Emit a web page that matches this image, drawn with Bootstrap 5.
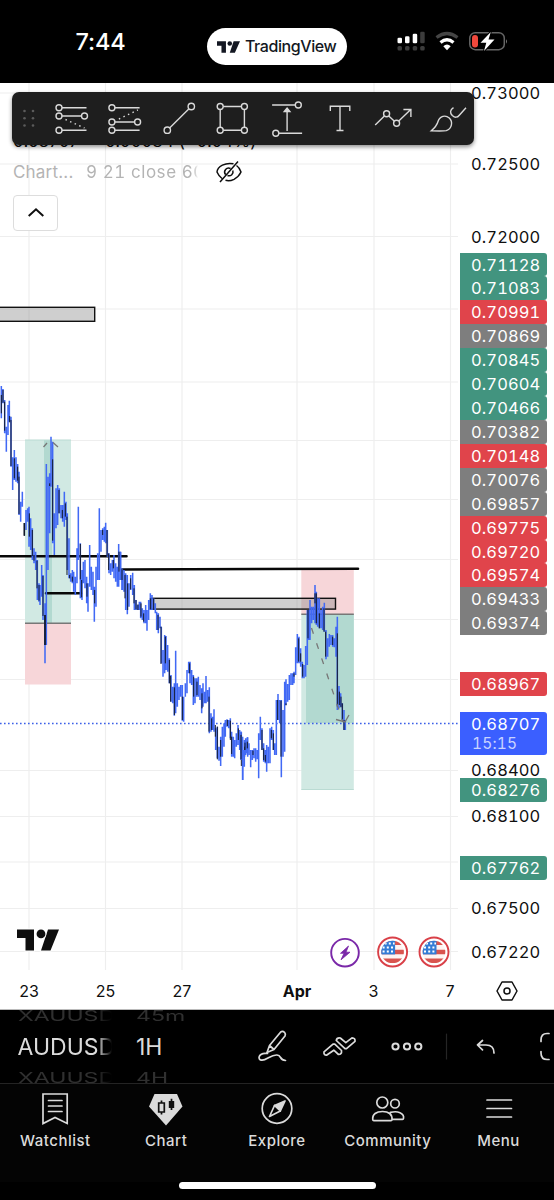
<!DOCTYPE html>
<html lang="en">
<head>
<meta charset="utf-8">
<meta name="viewport" content="width=device-width, initial-scale=1">
<title>TradingView</title>
<link href="https://cdn.jsdelivr.net/npm/bootstrap@5.3.0/dist/css/bootstrap.min.css" rel="stylesheet">
<style>
body{font-family:Inter,"Liberation Sans",sans-serif;background:#000;width:554px;height:1200px;overflow:hidden;font-size:17px;line-height:24px;color:#0f0f0f}
svg{display:block;overflow:visible;flex:none}
.status{height:83px;color:#fff}
.clock{width:201px;font-weight:500;font-size:23.5px;line-height:83px;letter-spacing:-.1px}
.island{width:140px;height:37px;margin-top:28px;margin-left:6px;color:#131722;font:500 16px/37px "Inter",sans-serif;letter-spacing:-.42px}
.board{height:927px;background:#fff;border-bottom:1px solid #bbb}
.plot{width:459.5px;height:887px;overflow:hidden}
.axis{width:94.5px;height:887px;overflow:hidden;font-variant-numeric:tabular-nums}
.tick,.tag{height:24px;line-height:25px;padding-left:11.5px;letter-spacing:.1px;font-size:16.5px;flex:none;white-space:nowrap}
.tag{width:87.5px;height:23.93px;color:#fff;border-radius:0 3px 3px 0}
.up{background:#42947f}.down{background:#e0444b}.flat{background:#7e7e7e}
.now{background:#3b5fff;height:43.5px;line-height:20px;padding-top:2.5px}
.now small{display:block;font-size:15.5px;color:#c8d3ff;padding-left:1px;letter-spacing:.2px}
.times{height:39px;font-size:16px}
.times span{width:76.5px;text-align:center;line-height:42px;flex:none}
.first{margin-left:-9.25px}
.month{margin-left:38.5px;font-weight:700}
.legend{left:13px;top:44px;width:300px}
.quote{height:24px;font-size:17px;white-space:pre;letter-spacing:.1px;line-height:29px}
.study{color:#b4b4b4;height:24px;margin-top:9px;font-size:17px}
.study .cut{width:112px;overflow:hidden;white-space:nowrap;margin-left:12px;letter-spacing:.55px;font-variant-numeric:tabular-nums;-webkit-mask-image:linear-gradient(90deg,#000 96%,transparent)}
.study .label{width:61px;letter-spacing:.2px;white-space:nowrap}
.fold{width:45px;height:36px;margin-top:10.5px;border:1.3px solid #ddd;border-radius:4px;background:#fff;padding:0}
.tools{left:11.5px;top:9px;width:462px;height:53px;background:#1e1e1e;border-radius:7px;box-shadow:0 2px 4px rgba(0,0,0,.45);fill:none;stroke:#d9d9d9;stroke-width:1.4}
.picker{height:74px;border-bottom:1px solid #242424;color:#dbdbdb;overflow:hidden}
.wheel{height:73px;margin-left:17.5px;overflow:hidden;white-space:nowrap}
.wheel div{font-size:23px;line-height:32px;height:31px}
.wheel .ghost{font-size:21px;color:#303030;transform:scale(1.1,.7);transform-origin:0 50%}
.sym{width:95px;-webkit-mask-image:linear-gradient(90deg,#000 83%,transparent 99%)}
.tf{width:90px;margin-left:23.5px}
.ico{fill:none;stroke:#dbdbdb;stroke-width:1.7;stroke-linejoin:round;stroke-linecap:round}
.tabs{height:98px;background:#040404;color:#dbdbdb}
.tabs a{color:inherit;font-weight:500;font-size:15px;line-height:20px;letter-spacing:.5px;width:110.8px}
.tabs .cap{margin-top:7px}
.home{width:197px;height:7px;border-radius:4px;background:#fff}
</style>
</head>
<body>
<header class="status d-flex">
  <div class="clock text-center">7:44</div>
  <div class="island bg-white rounded-pill d-flex align-items-center">
    <svg width="23" height="12" viewBox="0 0 36 18" style="margin-left:10px;margin-right:5px" fill="#131722"><path d="M0 0H14V18H7V7H0ZM26 0H36L28 18H20Z"/><circle cx="20" cy="3.6" r="3.6"/></svg>TradingView
  </div>
  <svg width="115" height="24" viewBox="395 29 115 24" style="margin-left:48px;margin-top:29px">
    <g fill="#fff"><rect x="397.5" y="37.7" width="4.5" height="5.5" rx="1.3"/><rect x="405" y="36.2" width="4.5" height="7" rx="1.3"/><rect x="412.7" y="33.7" width="4.5" height="9.5" rx="1.3"/></g>
    <g fill="#3c3c3c"><rect x="420.2" y="31.8" width="4.5" height="11.4" rx="1.3"/><rect x="397.5" y="46" width="4.5" height="4.5" rx="1.5"/><rect x="405" y="46" width="4.5" height="4.5" rx="1.5"/><rect x="412.7" y="46" width="4.5" height="4.5" rx="1.5"/><rect x="420.2" y="46" width="4.5" height="4.5" rx="1.5"/></g>
    <path d="M436.500 37.500Q447 29.500 457.500 37.500" fill="none" stroke="#454545" stroke-width="3.200"/><path d="M440.500 42.500Q447 37 453.500 42.500" fill="none" stroke="#fff" stroke-width="3.200"/><path d="M443.300 46.200Q447 43 450.700 46.200L447 50.200Z" fill="#fff"/>
    <rect x="469.800" y="32.700" width="34.500" height="17" rx="5.500" fill="none" stroke="#666" stroke-width="1.500"/><path d="M506 39.200q2 2 0 4.500z" fill="#777"/><rect x="472" y="35" width="6" height="12.500" rx="3" fill="#f0483c"/>
    <path d="M490.800 32 480.500 42.700H486.300L484 51 494.500 39.500H488.500Z" fill="#fff" stroke="#000" stroke-width="2" paint-order="stroke"/>
  </svg>
</header>

<main class="board position-relative">
  <div class="d-flex">
    <svg class="plot" width="459.500" height="887" viewBox="0 83 459.500 887">
      <path d="M29 83V970M105.500 83V970M182 83V970M297 83V970M374 83V970M450.500 83V970M0 93H458M0 164H458M0 236.500H458M0 309H458M0 382H458M0 440.500H458M0 499.500H458M0 559.500H458M0 619.500H458M0 679.500H458M0 770.500H458M0 816.500H458M0 862H458M0 908.500H458M0 951.500H458" stroke="#eee" stroke-width="1.200" fill="none"/>
      <rect x="25" y="440" width="46" height="183" fill="#d1e9e3"/><rect x="44" y="440" width="8" height="183" fill="#b2d9d0"/><rect x="25" y="623" width="46" height="61.500" fill="#f7d6d9"/>
      <rect x="301.300" y="570" width="52.500" height="44" fill="#f7d6d9"/><rect x="301.300" y="614" width="52.500" height="175.500" fill="#d1e9e3"/><rect x="306" y="614" width="47.800" height="109" fill="#b2d9d0"/>
      <path d="M25 440H71M301.300 789.500H353.800" stroke="#badbd3"/><path d="M25 623.200H71M301.300 614.300H353.800" stroke="#777" stroke-width="1.400"/>
      <g fill="#888" fill-opacity=".4" stroke="#111" stroke-width="1.400"><rect x="-2" y="307.300" width="96.700" height="14"/><rect x="151.500" y="598.300" width="184" height="10.800"/></g>
      <g stroke="#080808" stroke-width="2.600" stroke-linecap="round"><path d="M0 556.200H126.500M46 593.300H81M123 569.500 358 568.700"/></g>
      <path d="M0 723.500H459.500" stroke="#3b5fe8" stroke-width="1.300" stroke-dasharray="1.600 2.400"/>
      <!-- hourly bars, in thirds of a pixel: blue range first, dark falling bodies over it -->
      <g fill="none" stroke-width="4.600">
        <g transform="translate(0 370) scale(.33333)">
          <path stroke="#4169f5" d="M4 48V145M9 57V100M14 90V190M19 170V245M24 105V195M28 92V155M33 140V290M38 262V360M43 240V330M48 262V335M53 282V340M57 305V435M62 395V455M67 365V410M78 420V480M83 415V455M87 410V530M92 445V540M97 475V570M102 535V580M107 545V600M112 570V690M117 640V695M120 645V705M125 585V680M129 615V750M135 700V880M139 282V825M144 320V600M149 310V490M153 200V350M158 215V520M163 430V555M168 355V475M173 345V465M178 355V430M183 405V445M188 405V455M193 365V470M198 395V450M202 430V600M207 505V625M212 610V635M217 600V640M221 605V665M226 620V675M231 535V640M235 410V570M241 520V685M246 600V690M250 575V640M255 570V655M260 620V700M264 640V725M269 525V650M274 590V660M279 605V675M283 650V755M288 590V710M293 550V630M298 415V630M303 480V545M308 475V510M313 470V515M317 458V520M322 480V560M327 550V610M332 580V615M337 570V605M342 555V625M347 580V635M352 590V650M356 522V650M361 545V630M366 600V660"/>
          <path stroke="#111827" stroke-width="3" d="M4 75V130M9 60V98M14 95V182M29 138V157M33 150V288M43 265V325M53 290V332M57 320V432M73 459V497M88 430V500M97 480V558M102 555V572M111 572V655M117 645V692M129 618V738M135 735V825M149 340V348M158 268V512M177 360V430M187 420V445M196 400V440M201 440V615M209 615V625M217 620V635M241 522V628M245 630V682M261 640V680M284 660V700M308 480V495M321 480V558M326 550V600M340 570V595M357 545V605"/>
          <path stroke="#111827" d="M73 459V497M135 735V825"/>
        </g>
        <g transform="translate(120 550) scale(.33333)">
          <path stroke="#4169f5" d="M2 5V90M7 55V120M12 60V125M17 70V180M22 75V193M27 100V170M32 75V120M38 68V135M43 105V180M48 150V180M53 165V180M58 155V180M62 155V205M67 175V210M72 180V220M77 165V220M81 180V242M86 150V210M91 130V180M96 135V180M101 145V180M106 160V190M110 185V240M115 190V250M120 200V235M124 230V340M129 300V380M134 255V370M138 258V360M143 285V365M148 325V400M153 375V455M158 410V460M163 400V497M167 302V490M172 400V470M177 410V450M182 405V440M187 405V512M191 440V515M196 400V440M201 360V430M206 335V370M210 335V400M215 360V405M220 375V465M225 385V460M230 385V440M235 380V440M240 405V450M245 415V490M249 400V470M254 425V460M258 378V460M263 420V455M268 412V550M273 490V545M278 500V540M282 478V545M287 535V600M292 530V625M297 590V632M302 560V648M307 530V620M312 520V590M316 510V560M321 508V530M326 510V535M331 505V565M335 545V620M340 560V620M344 570V625M349 550V590M354 525V585M359 540V600M364 545V610M368 600V690M373 570V620M378 575V610M383 562V620"/>
          <path stroke="#111827" stroke-width="3" d="M6 55V90M15 75V145M23 100V180M32 85V118M42 115V160M48 150V178M54 163V180M63 160V200M71 190V215M91 145V178M101 145V180M114 195V240M123 230V342M136 260V340M148 330V400M152 378V455M163 412V495M187 440V510M209 340V370M221 380V440M231 395V435M246 430V475M267 440V545M275 505V540M286 525V560M292 530V628M302 570V620M322 510V528M331 512V570M335 560V612M355 535V570M364 550V648M374 590V620"/>
        </g>
        <g transform="translate(240 560) scale(.33333)">
          <path stroke="#4169f5" d="M3 515V600M8 530V660M13 570V620M17 535V585M22 532V580M27 550V585M32 570V622M37 570V600M42 565V595M47 565V605M52 570V598M56 520V655M61 470V540M66 505V570M71 550V605M76 570V610M80 555V635M85 560V610M90 505V610M95 500V540M100 510V570M104 550V585M109 420V585M114 402V480M119 420V490M124 420V652M129 450V590M134 365V575M138 358V435M143 372V425M148 345V420M153 340V375M158 340V375M162 335V370M167 262V345M172 222V310M177 230V310M182 265V320M187 305V355M192 315V355M197 258V350M202 150V315M206 150V240M210 120V240M215 140V190M220 140V180M225 75V190M229 95V195M233 115V200M238 115V205M243 150V205M248 140V210M253 128V215M258 210V298M263 235V290M268 222V260M273 225V255M278 225V260M283 235V262M288 200V290M292 170V450M297 378V445M302 400V440M307 430V480M312 450V510M316 480V510"/>
          <path stroke="#111827" stroke-width="3" d="M3 525V598M15 548V570M22 545V565M39 572V585M66 510V570M71 565V600M76 585V605M94 510V535M100 520V570M113 420V480M123 422V590M138 430V436M162 340V350M176 235V305M182 280V305M188 312V350M204 150V235M225 100V130M229 100V190M238 160V205M252 145V215M257 215V290M278 230V255M292 220V440M298 395V435M303 410V442M307 430V480M312 480V510"/>
        </g>
      </g>
      <g stroke="#777" stroke-width="1.300" fill="none"><path d="M311.500 628 343 722" stroke-dasharray="6 10"/><path d="M43.500 447 47 443M53 442.500 58 447M336 719.500 345 722 349 715"/></g>
      <g transform="translate(17 929.500)" fill="#0f0f0f" stroke="#fff" stroke-width="2" paint-order="stroke"><path d="M0 0H17V21H8.500V8.500H0ZM31 0H42L33.500 21H24Z"/><circle cx="24" cy="4.400" r="4.400"/></g>
      <circle cx="345" cy="952.700" r="13.800" fill="#fff" stroke="#7a28a8" stroke-width="1.900"/><path d="M348.500 946 340.500 953.300H344L341 959.800 350 952.200H346Z" fill="#7a28a8" stroke="#7a28a8" stroke-width=".8" stroke-linejoin="round"/>
      <defs><clipPath id="disc"><circle r="11.300"/></clipPath>
      <g id="usa"><circle r="14.500" fill="#fff" stroke="#d94048" stroke-width="1.900"/><g clip-path="url(#disc)"><rect x="-12" y="-12" width="24" height="24" fill="#fff4f2"/><path d="M-12-9.300H12M-12 0H12M-12 8.700H12" stroke="#d9544f" stroke-width="4.600"/><rect x="-12" y="-12" width="14.500" height="14.400" fill="#347cd5"/><path d="M-8-8.500H2M-10-4.500H2M-10-.5H2" stroke="#fff" stroke-width="2" stroke-dasharray="2 2.200"/></g></g></defs>
      <use href="#usa" x="392.600" y="952"/><use href="#usa" x="434" y="952"/>
    </svg>
    <div class="axis d-flex flex-column">
      <div class="tick" style="margin-top:-2px">0.73000</div>
      <div class="tick" style="margin-top:47px">0.72500</div>
      <div class="tick" style="margin-top:48.500px">0.72000</div>
      <div class="tag up" style="margin-top:4px">0.71128</div><div class="tag up">0.71083</div><div class="tag down">0.70991</div><div class="tag flat">0.70869</div><div class="tag up">0.70845</div><div class="tag up">0.70604</div><div class="tag up">0.70466</div><div class="tag flat">0.70382</div><div class="tag down">0.70148</div><div class="tag flat">0.70076</div><div class="tag flat">0.69857</div><div class="tag down">0.69775</div><div class="tag down">0.69720</div><div class="tag down">0.69574</div><div class="tag flat">0.69433</div><div class="tag flat">0.69374</div>
      <div class="tag down" style="margin-top:37px">0.68967</div>
      <div class="tag now" style="margin-top:15.500px">0.68707<small>15:15</small></div>
      <div class="tick" style="margin-top:3px">0.68400</div>
      <div class="tag up" style="margin-top:-4.500px">0.68276</div>
      <div class="tick" style="margin-top:2.500px">0.68100</div>
      <div class="tag up" style="margin-top:28px">0.67762</div>
      <div class="tick" style="margin-top:16px">0.67500</div>
      <div class="tick" style="margin-top:19.500px">0.67220</div>
    </div>
  </div>
  <div class="times d-flex">
    <span class="first">23</span><span>25</span><span>27</span><span class="month">Apr</span><span>3</span><span>7</span>
    <svg class="ms-auto" width="22" height="20" viewBox="0 0 22 20" style="margin-right:36px;margin-top:11px" fill="none" stroke="#0f0f0f" stroke-width="1.500"><path d="M6 1H16L21 10 16 19H6L1 10Z" stroke-linejoin="round"/><circle cx="11" cy="10" r="3"/></svg>
  </div>

  <div class="legend position-absolute">
    <div class="quote">0.68707   −0.00034 (−0.04%)</div>
    <div class="study d-flex"><span class="label">Chart...</span><span class="cut">9 21 close 60</span>
      <svg width="26" height="22" viewBox="0 0 26 22" style="margin-left:17.500px;margin-top:1px" fill="none" stroke="#0f0f0f" stroke-width="1.500"><path d="M17.500 2.800A13 9 0 0 0 1 11Q3 15.500 6 17.500M9.500 19.300Q13.500 20.500 18 18.300 23 15.500 25 11 23.500 6.500 20.500 4.500M4 21 22 .5M9.500 13.500A4 4 0 0 1 14.500 7.500M11.500 14.500A4 4 0 0 0 16.800 9.500M12.200 11.500 14 9.700"/></svg></div>
    <button class="fold d-flex align-items-center justify-content-center"><svg width="16" height="9" viewBox="0 0 16 9" fill="none" stroke="#0f0f0f" stroke-width="2"><path d="M.7 8 8 1.300 15.300 8"/></svg></button>
  </div>

  <div class="tools position-absolute d-flex">
    <svg width="33" height="53" viewBox="11.500 92 33 53" fill="#5b5b5b" stroke="none"><circle cx="24" cy="111" r="1.300"/><circle cx="32.500" cy="111" r="1.300"/><circle cx="24" cy="118.200" r="1.300"/><circle cx="32.500" cy="118.200" r="1.300"/><circle cx="24" cy="125.500" r="1.300"/><circle cx="32.500" cy="125.500" r="1.300"/></svg>
    <svg width="53.600" height="53" viewBox="44.500 92 53.600 53"><circle cx="58.500" cy="107.700" r="3"/><circle cx="58.500" cy="116" r="3"/><circle cx="84" cy="116" r="3"/><circle cx="58.500" cy="130.200" r="3"/><path d="M61.500 107.700H86M61.500 116H81M61.500 130.200H86"/><path d="M65 119.500 84 128" stroke-dasharray="1.500 3.500"/></svg>
    <svg width="53.600" height="53" viewBox="98.100 92 53.600 53"><circle cx="112" cy="107.700" r="3"/><circle cx="112" cy="122" r="3"/><circle cx="137.700" cy="122" r="3"/><circle cx="112" cy="130.200" r="3"/><path d="M115 107.700H139.700M115 122H134.700M115 130.200H139.700"/><path d="M119 119 138 110" stroke-dasharray="1.500 3.500"/></svg>
    <svg width="53.600" height="53" viewBox="151.700 92 53.600 53"><circle cx="167" cy="130.200" r="3.200"/><circle cx="191" cy="106.500" r="3.200"/><path d="M169.300 128 188.700 108.800"/></svg>
    <svg width="53.600" height="53" viewBox="205.300 92 53.600 53"><circle cx="220.500" cy="106.500" r="3"/><circle cx="244.700" cy="106.500" r="3"/><circle cx="220.500" cy="130.200" r="3"/><circle cx="244.700" cy="130.200" r="3"/><path d="M223.500 106.500H241.700M223.500 130.200H241.700M220.500 109.500V127.200M244.700 109.500V127.200"/></svg>
    <svg width="53.600" height="53" viewBox="258.900 92 53.600 53"><circle cx="298.200" cy="105" r="3"/><circle cx="275.700" cy="133.200" r="3"/><path d="M272 105H295.200M278.700 133.200H302M287 110V131"/><path d="M284.200 111.500 287 108 289.800 111.500Z" fill="#d9d9d9"/></svg>
    <svg width="53.600" height="53" viewBox="312.500 92 53.600 53"><path d="M330.800 111V106.300H350.300V111M340.500 106.300V130.500M337 130.500H344"/></svg>
    <svg width="53.600" height="53" viewBox="366.100 92 53.600 53"><circle cx="386.700" cy="113.700" r="3"/><circle cx="396.700" cy="123.300" r="3"/><path d="M375.300 125 384.500 115.900M388.900 115.900 394.500 121.200M398.900 121.100 410.800 109.500M403.500 109.500H411V117"/></svg>
    <svg width="53.600" height="53" viewBox="419.700 92 53.600 53"><path d="M431 130.800Q436.500 126 437.700 121.500C439.500 116 445 114.500 449 118 453 122 451.500 129 446 130.600Q443 131.200 431 130.800ZM453.200 107.700Q448 111 452 115.500 456 119 459 115.200L465.700 107.700"/></svg>
  </div>
</main>

<section class="picker d-flex">
  <div class="wheel sym"><div class="ghost" style="margin-top:-10px">XAUUSD</div><div>AUDUSD</div><div class="ghost">XAUUSD</div></div>
  <div class="wheel tf"><div class="ghost" style="margin-top:-10px">45m</div><div>1H</div><div class="ghost">4H</div></div>
  <svg class="ico" width="328" height="73" viewBox="226 1010 328 73">
    <path d="M267 1052.500 269.500 1045.500 280.500 1032.200Q282.500 1030.500 284.500 1032.300 286 1034 285 1036L274 1049.500ZM269.500 1045.500 274 1049.500M267.500 1053.500C258 1052 257 1060.500 262 1060.200 267 1060 271 1054.500 277 1055 282 1055.500 279 1060 285.500 1060.500"/>
    <path d="M326.500 1055.200Q323.500 1055 324 1051.800L333 1044.200 334.800 1044.200 341.500 1050.500Q342 1054.500 338.500 1054.500L333.800 1050.200ZM336.300 1040.500Q336.800 1037.500 340.300 1038L345.800 1042.600 352 1037.800Q355.500 1038 355 1041.400L346.500 1048.700 345 1048.700Z"/>
    <g stroke-width="2"><circle cx="395.500" cy="1046.500" r="3.100"/><circle cx="407" cy="1046.500" r="3.100"/><circle cx="418.300" cy="1046.500" r="3.100"/></g>
    <path d="M446.500 1034V1059" stroke="#252525" stroke-width="1.200"/>
    <path d="M482.500 1040.500 477.500 1045 482.500 1049.800M478 1045H486Q494 1045 494 1053"/>
    <path d="M549 1033.500H547Q541 1033.500 541 1040V1041.500M541 1051.500V1053Q541 1059.500 547 1059.500H549"/>
  </svg>
</section>
<nav class="tabs d-flex text-center">
  <a class="text-decoration-none"><svg class="ico mx-auto" width="34" height="40" viewBox="38 1084 34 40"><path d="M43 1094H67.200V1123.500L55 1117.500 43 1123.500ZM48.500 1100.500H62M48.500 1106H62M48.500 1111.500H62" stroke-linejoin="miter"/></svg><div class="cap">Watchlist</div></a>
  <a class="text-decoration-none"><svg class="mx-auto" width="34" height="40" viewBox="149 1084 34 40"><path d="M154.500 1094H177L182.500 1106.500 166 1125.500 149 1106.500Z" fill="#dbdbdb"/><path d="M161.500 1100.500V1103M161.500 1112V1114.500M158.700 1103H164.300V1112H158.700ZM171.500 1098.700V1110" fill="none" stroke="#111" stroke-width="1.700"/><rect x="168.800" y="1101" width="5.400" height="7" fill="#111"/></svg><div class="cap">Chart</div></a>
  <a class="text-decoration-none"><svg class="ico mx-auto" width="34" height="40" viewBox="259.500 1084 34 40"><circle cx="276.500" cy="1108.500" r="14.800"/><path d="M284.500 1101 279.800 1111 274 1105.500Z" fill="#dbdbdb"/><path d="M274 1105.500 269 1116.500 279.800 1111"/></svg><div class="cap">Explore</div></a>
  <a class="text-decoration-none"><svg class="ico mx-auto" width="34" height="40" viewBox="370.500 1084 34 40"><circle cx="381.800" cy="1102.500" r="5.500"/><circle cx="394.500" cy="1103.700" r="4.300"/><path d="M372.300 1120C371.500 1114 376 1111.500 382 1111.500S392 1114 391.500 1120Q391.400 1120.700 390.500 1120.700H373.300Q372.400 1120.700 372.300 1120ZM390 1112.400C397 1110.500 404 1113 403 1118.500Q402.900 1119.300 402 1119.300H392"/></svg><div class="cap">Community</div></a>
  <a class="text-decoration-none"><svg class="ico mx-auto" width="34" height="40" viewBox="481 1084 34 40"><path d="M486 1100H510.500M486 1108.500H510.500M486 1117H510.500"/></svg><div class="cap">Menu</div></a>
</nav>
<div class="home mx-auto"></div>
<script src="https://cdn.jsdelivr.net/npm/bootstrap@5.3.0/dist/js/bootstrap.bundle.min.js"></script>
</body>
</html>
